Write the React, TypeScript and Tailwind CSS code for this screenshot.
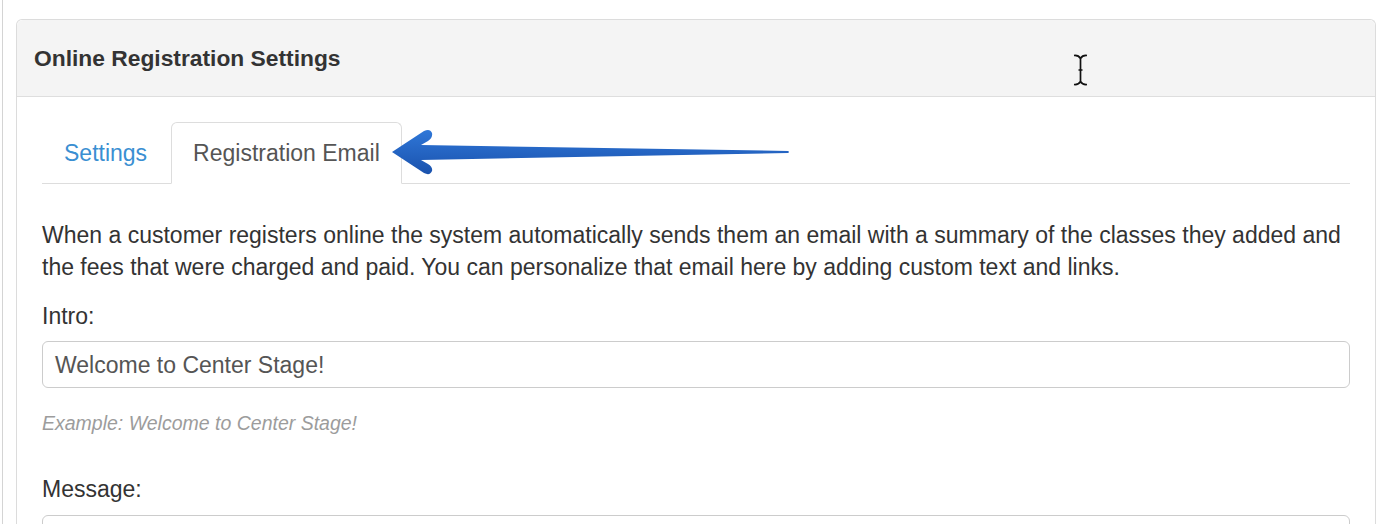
import React from 'react';

const font = { fontFamily: '"Liberation Sans", Arial, Helvetica, sans-serif' };

const Arrow: React.FC = () => (
  <svg className="absolute left-[380px] top-[120px]" width="420" height="70" viewBox="0 0 420 70">
    <defs>
      <linearGradient id="arrowFill" x1="0" y1="0" x2="0" y2="1">
        <stop offset="0" stopColor="#2f77d8" />
        <stop offset="1" stopColor="#1a52ad" />
      </linearGradient>
    </defs>
    <path
      d="M12 32 L44 11 Q50 8 52 13 Q53 18 48 21 L41 25 L408 31 Q410 32 408 33 L41 40 L48 44 Q53 47 52 51 Q50 56 44 53 Z"
      fill="url(#arrowFill)"
    />
  </svg>
);

const TextCursor: React.FC = () => (
  <svg className="absolute left-[1072px] top-[53px]" width="17" height="34" viewBox="0 0 17 34">
    <path
      d="M2 2.5 Q6.5 2 8.5 5.5 Q10.5 2 15 2.5 M8.5 5.5 V28.5 M2 31.5 Q6.5 32 8.5 28.5 Q10.5 32 15 31.5 M6.5 17 H10.5"
      fill="none"
      stroke="#111"
      strokeWidth="1.7"
    />
  </svg>
);

const App: React.FC = () => {
  return (
    <div className="relative h-[524px] overflow-hidden bg-white pl-[2px]" style={font}>
      <div className="h-full border-l border-[#d4d4d4] pl-[13px] pt-[19px]">
        {/* Panel */}
        <div className="w-[1360px] rounded-t-[6px] border border-b-0 border-[#dcdcdc] bg-white">
          <div className="flex h-[77px] items-center rounded-t-[6px] border-b border-[#dedede] bg-[#f4f4f4] px-[17px]">
            <h3 className="text-[22.8px] font-bold text-[#333]">Online Registration Settings</h3>
          </div>

          <div className="px-[25px] pt-[25px] text-[23px] leading-[32px] text-[#333]">
            {/* Tabs */}
            <ul className="flex border-b border-[#dddddd]">
              <li className="-mb-px mr-[2px]">
                <span className="block border border-transparent px-[21px] py-[14px] text-[#3a8fd2]">Settings</span>
              </li>
              <li className="-mb-px">
                <span className="block rounded-t-[6px] border border-[#dddddd] border-b-white bg-white px-[21px] py-[14px] text-[#555]">
                  Registration Email
                </span>
              </li>
            </ul>

            <p className="mt-[35px]">
              When a customer registers online the system automatically sends them an email with a summary of the classes they added and
              the fees that were charged and paid. You can personalize that email here by adding custom text and links.
            </p>

            <label className="mt-[17px] block">Intro:</label>
            <div className="mt-[9px] flex h-[47px] items-center rounded-[6px] border border-[#cccccc] px-[12px] text-[#555]">
              Welcome to Center Stage!
            </div>
            <p className="mt-[21px] text-[19.5px] leading-[28px] italic text-[#9c9c9c]">Example: Welcome to Center Stage!</p>

            <label className="mt-[36px] block">Message:</label>
            <div className="mt-[10px] h-[60px] rounded-[6px] border border-[#cccccc]"></div>
          </div>
        </div>
      </div>

      <Arrow />
      <TextCursor />
    </div>
  );
};

export default App;
